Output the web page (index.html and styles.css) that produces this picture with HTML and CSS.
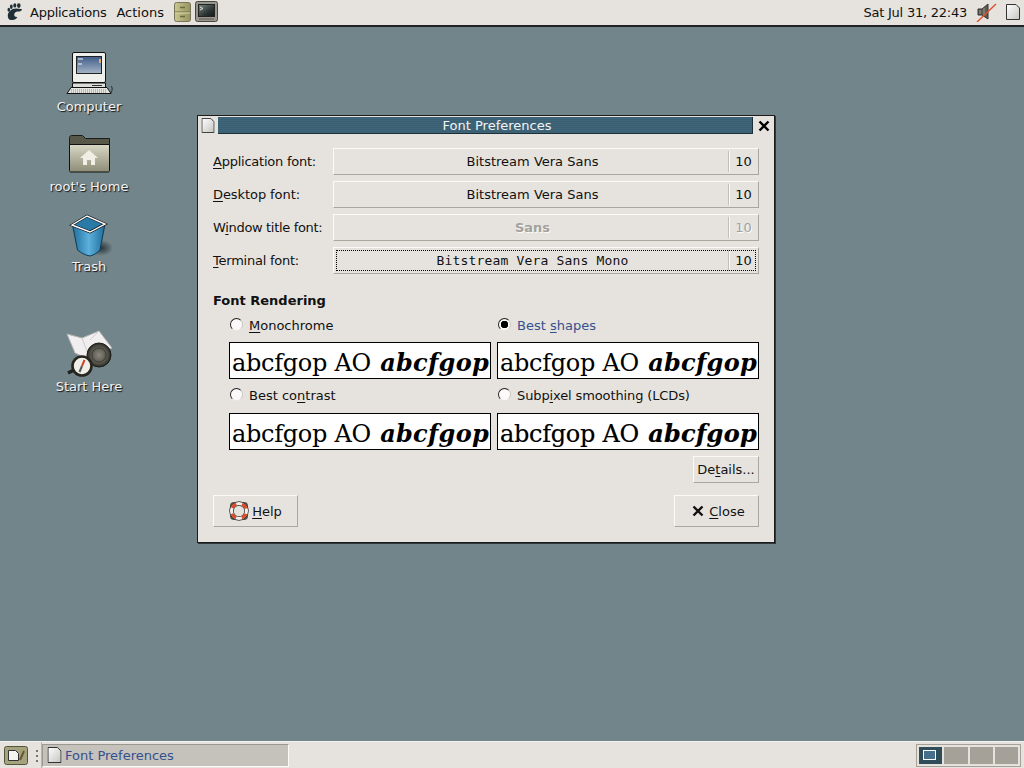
FILE: index.html
```html
<!DOCTYPE html>
<html lang="en">
<head>
<meta charset="utf-8">
<title>Font Preferences</title>
<link rel="stylesheet" href="styles.css">
</head>
<body>
<div class="screen">
  <header class="panel-top">
    <svg class="foot" viewBox="0 0 16 18" width="16" height="18"><path fill="#1f2f38" d="M9.500 5.500c3 .2 4.500 1 5.500.4-.3 1.800-2 2.700-4 2.600-2.200-.1-3.800 1.300-3.800 3.200 0 1.700 1.500 2.500 3.300 2.200-1.300 2-3.200 3.200-5.500 3C2.300 17.600.6 15.300.8 12.400 1 8.600 5 5.200 9.500 5.500z"/><ellipse fill="#1f2f38" cx="1.800" cy="6.800" rx="1.300" ry="2"/><ellipse fill="#1f2f38" cx="4.300" cy="3.800" rx="1.400" ry="2.200"/><ellipse fill="#1f2f38" cx="7.800" cy="2.400" rx="1.500" ry="2.200"/><ellipse fill="#1f2f38" cx="11.800" cy="2.600" rx="1.800" ry="2.300"/></svg>
    <span class="menu-apps">Applications</span>
    <span class="menu-actions">Actions</span>
    <svg class="launcher-a" viewBox="0 0 17 20" width="17" height="20"><defs><linearGradient id="cab" x1="0" x2="1"><stop offset="0" stop-color="#c9c68e"/><stop offset="1" stop-color="#96925f"/></linearGradient></defs><rect x=".5" y=".5" width="16" height="19" rx="2" fill="url(#cab)" stroke="#77755a"/><path d="M1 10h15" stroke="#6e6c48"/><path d="M1 11h15" stroke="#dcdaaa"/><path d="M6 5.500h5M6 14.500h5" stroke="#6a6844" stroke-width="1.500"/></svg>
    <svg class="launcher-b" viewBox="0 0 23 21" width="23" height="21"><defs><linearGradient id="term" x1="0" y1="0" x2="1" y2="1"><stop offset="0" stop-color="#7b8a86"/><stop offset=".6" stop-color="#2c3533"/><stop offset="1" stop-color="#141918"/></linearGradient></defs><rect x=".5" y=".5" width="22" height="20" rx="2" fill="#98978c" stroke="#47473f"/><rect x="3.500" y="3.500" width="16" height="12" fill="url(#term)" stroke="#222"/><path d="M5 6l3 1.500-3 1.500" stroke="#dfe5e2" fill="none"/><path d="M4 18h15" stroke="#5c5b53"/></svg>
    <span class="clock">Sat Jul 31, 22:43</span>
    <svg class="speaker" viewBox="0 0 21 20" width="21" height="20"><path d="M2 7h4l6-5v15l-6-4H2z" fill="#5f5d55" stroke="#33322d"/><path d="M4 8v4M8 6v8" stroke="#98958a"/><path d="M1 20L20 2" stroke="#e0502c" stroke-width="1.400"/></svg>
    <svg class="note" viewBox="0 0 14 16" width="14" height="16"><use href="#doc"/></svg>
  </header>

  <main class="desktop">
    <svg class="sprites" width="0" height="0"><defs>
      <linearGradient id="paper" x1="0" y1="0" x2="1" y2="1"><stop offset="0" stop-color="#fff"/><stop offset="1" stop-color="#c4c4c0"/></linearGradient>
      <symbol id="doc" viewBox="0 0 14 16"><path d="M.5.500h9.500l3.500 3.500v11.500H.5z" fill="url(#paper)" stroke="#333"/></symbol>
    </defs></svg>

    <div class="icons">
      <figure class="icon">
        <svg viewBox="0 0 48 48" width="48" height="48"><defs><linearGradient id="scr" x1="0" y1="0" x2="0" y2="1"><stop offset="0" stop-color="#3f5d88"/><stop offset="1" stop-color="#a5b4c6"/></linearGradient></defs><rect x="7.500" y="2.500" width="33" height="30" rx="1.500" fill="#efefec" stroke="#111"/><rect x="11.500" y="6.500" width="25" height="17" fill="url(#scr)" stroke="#222"/><path d="M13 9h5M13 14h4" stroke="#fff"/><path d="M34 9h2v4h-2z" fill="#e0b060"/><path d="M7.500 33h33v5h-33z" fill="#dcdcd8" stroke="#111"/><path d="M27 35.500h10" stroke="#333"/><path d="M2 43.500l4-6h36l4 6z" fill="#e4e4e0" stroke="#111"/><path d="M6 40h36M6 42h36" stroke="#8a8a86" stroke-dasharray="1 1"/><path d="M46 36c2 2 1 5 0 7" stroke="#222" fill="none"/></svg>
        <figcaption>Computer</figcaption>
      </figure>
      <figure class="icon">
        <svg viewBox="0 0 48 48" width="48" height="48"><defs><linearGradient id="fld" x1="0" y1="0" x2="0" y2="1"><stop offset="0" stop-color="#d9d8c6"/><stop offset="1" stop-color="#8d8c76"/></linearGradient></defs><path d="M4.500 10V7.500c0-1 1-2 2-2h11l3 3h24v9h-40z" fill="#58584a" stroke="#1d1d17"/><path d="M4.500 14.500h40v26c0 1-.7 1.500-1.500 1.500H6c-1 0-1.500-.5-1.500-1.500z" fill="url(#fld)" stroke="#111"/><path d="M24 20l9 8h-3v7h-4v-5h-4v5h-4v-7h-3z" fill="#efefe6"/></svg>
        <figcaption>root's Home</figcaption>
      </figure>
      <figure class="icon">
        <svg viewBox="0 0 48 48" width="48" height="48"><defs><linearGradient id="bin" x1="0" x2="1"><stop offset="0" stop-color="#1f6d9c"/><stop offset=".5" stop-color="#5cb0dc"/><stop offset="1" stop-color="#1e6a98"/></linearGradient><radialGradient id="shade"><stop offset="0" stop-color="#2a3336"/><stop offset="1" stop-color="#2a3336" stop-opacity="0"/></radialGradient></defs><ellipse cx="36" cy="38" rx="12" ry="8" fill="url(#shade)"/><path d="M7.500 15l5 25c4 3 7 5 12.500 6 4-1 7-3 10-6l5-26z" fill="url(#bin)" stroke="#123a52"/><path d="M7 15l15-9 18 8-15 8z" fill="#2a7aa8"/><path d="M7 15l15-9 18 8-15 8z" fill="none" stroke="#111" stroke-width="2.600"/><path d="M7 15l15-9 18 8-15 8z" fill="none" stroke="#fff" stroke-width="1.400"/></svg>
        <figcaption>Trash</figcaption>
      </figure>
      <figure class="icon icon-gap">
        <svg viewBox="0 0 48 48" width="48" height="48"><defs><radialGradient id="lid"><stop offset="0" stop-color="#8a887c"/><stop offset=".7" stop-color="#55534a"/><stop offset="1" stop-color="#2b2a25"/></radialGradient></defs><path d="M2 4l15 4 17-7 13 17-14 5-8 7-15-7z" fill="#f0eeee" stroke="#b4b2b0"/><path d="M17 8l8 21M34 1l-9 9" stroke="#cfcdcb"/><circle cx="34" cy="25" r="12" fill="url(#lid)" stroke="#1d1d1a"/><circle cx="34" cy="25" r="7" fill="none" stroke="#3c3b35"/><path d="M3 43l8-4" stroke="#222" stroke-width="3.500"/><circle cx="17" cy="36" r="9.500" fill="#efefe8" stroke="#26251f" stroke-width="2.600"/><path d="M19.500 30l-2.500 6" stroke="#d4422a" stroke-width="2"/><path d="M17 36l-2.500 6" stroke="#555" stroke-width="2"/></svg>
        <figcaption>Start Here</figcaption>
      </figure>
    </div>

    <section class="window">
      <div class="titlebar">
        <svg class="win-menu" viewBox="0 0 14 16" width="14" height="15"><use href="#doc"/></svg>
        <div class="title">Font Preferences</div>
        <svg class="win-close" viewBox="0 0 12 12" width="12" height="12"><path d="M1.500 1.500l9 9M10.500 1.500l-9 9" stroke="#000" stroke-width="2.400"/></svg>
      </div>
      <div class="content">
        <div class="fonts">
          <label class="font-label"><u>A</u>pplication font:</label>
          <div class="font-btn"><span class="font-name">Bitstream Vera Sans</span><span class="font-size">10</span></div>
          <label class="font-label loose"><u>D</u>esktop font:</label>
          <div class="font-btn"><span class="font-name">Bitstream Vera Sans</span><span class="font-size">10</span></div>
          <label class="font-label tight">W<u>i</u>ndow title font:</label>
          <div class="font-btn disabled"><span class="font-name strong">Sans</span><span class="font-size">10</span></div>
          <label class="font-label"><u>T</u>erminal font:</label>
          <div class="font-btn focused"><span class="font-name mono">Bitstream Vera Sans Mono</span><span class="font-size">10</span></div>
        </div>

        <h2 class="heading">Font Rendering</h2>

        <div class="rendering">
          <div class="option">
            <div class="radio-row"><span class="radio"></span><span><u>M</u>onochrome</span></div>
            <div class="sample">abcfgop AO <b>abcfgop</b></div>
          </div>
          <div class="option">
            <div class="radio-row hot"><span class="radio on"></span><span>Best <u>s</u>hapes</span></div>
            <div class="sample">abcfgop AO <b>abcfgop</b></div>
          </div>
          <div class="option">
            <div class="radio-row lower"><span class="radio"></span><span>Best co<u>n</u>trast</span></div>
            <div class="sample">abcfgop AO <b>abcfgop</b></div>
          </div>
          <div class="option">
            <div class="radio-row lower"><span class="radio"></span><span class="subpixel">Subp<u>i</u>xel smoothing (LCDs)</span></div>
            <div class="sample sample-lcd">abcfgop AO <b>abcfgop</b></div>
          </div>
        </div>

        <div class="details-row"><div class="btn btn-details">De<u>t</u>ails...</div></div>

        <div class="actions">
          <div class="btn btn-action">
            <svg viewBox="0 0 20 20" width="20" height="20"><rect x="1" y="1" width="18" height="18" rx="4" fill="#55534e"/><circle cx="10" cy="10" r="7.500" fill="#e6e3de" stroke="#333" stroke-width="4.500"/><circle cx="10" cy="10" r="7.500" fill="none" stroke="#f2f0ec" stroke-width="3"/><circle cx="10" cy="10" r="7.500" fill="none" stroke="#dc4a26" stroke-width="3" stroke-dasharray="5.890 5.890" stroke-dashoffset="-2.950"/></svg>
            <span><u>H</u>elp</span>
          </div>
          <div class="btn btn-action btn-close">
            <svg viewBox="0 0 12 12" width="12" height="12"><path d="M1.500 1.500l9 9M10.500 1.500l-9 9" stroke="#111" stroke-width="2.400"/></svg>
            <span><u>C</u>lose</span>
          </div>
        </div>
      </div>
    </section>
  </main>

  <footer class="panel-bottom">
    <svg class="show-desk" viewBox="0 0 24 19" width="24" height="19"><rect x=".5" y=".5" width="23" height="18" rx="2" fill="#a5a37e" stroke="#55553e"/><path d="M4.500 4.500h7l3 3v7h-10z" fill="#f4f4f0" stroke="#333"/><path d="M16 14l4-9" stroke="#6b5430" stroke-width="2"/></svg>
    <div class="handle"></div>
    <div class="task">
      <svg viewBox="0 0 14 16" width="15" height="16"><use href="#doc"/></svg>
      <span>Font Preferences</span>
    </div>
    <div class="pager">
      <div class="ws ws-on"><span class="mini"></span></div>
      <div class="ws"></div>
      <div class="ws"></div>
      <div class="ws"></div>
    </div>
  </footer>
</div>
</body>
</html>
```
FILE: styles.css
```css
* { box-sizing: border-box; }
html, body { margin: 0; height: 100%; overflow: hidden; }
body { font-family: "DejaVu Sans", sans-serif; font-size: 13px; color: #111; }
u { text-underline-offset: 2px; text-decoration-thickness: 1px; }

.screen { display: flex; flex-direction: column; width: 1024px; height: 768px; background: #72858b; }

/* top panel */
.panel-top {
  display: flex; align-items: center; height: 27px; flex: none;
  padding-bottom: 2px; background: #e6e3de; border-bottom: 2px solid #222;
}
.foot { margin-left: 7px; }
.menu-apps { margin: 2px 0 0 7px; letter-spacing: -.25px; }
.menu-actions { margin: 2px 0 0 10px; }
.launcher-a { margin-left: 10px; }
.launcher-b { margin-left: 4px; }
.clock { margin: 2px 0 0 auto; letter-spacing: -.24px; }
.speaker { margin-left: 9px; }
.note { margin: 0 4px 0 9px; }

/* desktop */
.desktop { position: relative; flex: 1; min-height: 0; }
.sprites { position: absolute; }
.icons { display: flex; flex-direction: column; gap: 16px; width: 80px; margin-left: 49px; padding-top: 23px; }
.icon { margin: 0; display: flex; flex-direction: column; align-items: center; height: 64px; }
.icon svg { flex: none; }
.icon figcaption { height: 16px; margin-top: 1px; line-height: 16px; white-space: nowrap; color: #f2f2f2; text-shadow: 1px 1px 1px #111; }
.icon-gap { margin-top: 40px; }

/* dialog */
.window {
  position: absolute; left: 197px; top: 88px; width: 578px; height: 428px;
  background: #e6e3de; border: 1px solid #1c1c1c; box-shadow: 1px 1px 0 #30383b;
}
.titlebar { display: flex; align-items: center; height: 19px; padding: 0 4px 0 3px; }
.win-menu { flex: none; }
.title {
  flex: 1; height: 17px; margin-left: 3px; padding-left: 24px; line-height: 17px; text-align: center;
  color: #f4f4f4; background: repeating-linear-gradient(0deg, #3f6579 0 1px, #3a5f73 1px 2px);
  border: 1px solid #1c2f39; border-width: 0 1px 1px 0;
}
.win-close { flex: none; margin-left: 5px; }
.content { padding: 13px 15px 0; }

.fonts { display: grid; grid-template-columns: 120px 426px; grid-auto-rows: 27px; row-gap: 6px; align-items: center; }
.font-label { white-space: nowrap; letter-spacing: -.24px; }
.loose { letter-spacing: -.08px; }
.tight { letter-spacing: -.33px; }
.font-btn {
  display: flex; align-items: center; height: 27px; background: #e6e3de;
  border: 1px solid; border-color: #fbfaf8 #a9a69f #a9a69f #fbfaf8;
}
.font-name { flex: 1; text-align: center; padding-left: 3px; }
.font-size { flex: none; width: 30px; height: 21px; line-height: 21px; text-align: center; border-left: 1px solid #c2bfb8; box-shadow: inset 1px 0 0 #fbfaf8; }
.strong { font-weight: bold; }
.mono { font-family: "DejaVu Sans Mono", monospace; font-size: 13px; letter-spacing: .17px; }
.disabled { color: #a3a19b; text-shadow: 1px 1px 0 #fbfaf8; }
.focused { outline: 1px dotted #000; outline-offset: -4px; }

.heading { margin: 19px 0 6px; height: 16px; font-size: 13px; line-height: 16px; font-weight: bold; }

.rendering { display: grid; grid-template-columns: 262px 262px; column-gap: 6px; row-gap: 7px; margin-left: 16px; }
.option { display: flex; flex-direction: column; gap: 9px; }
.radio-row { display: flex; align-items: center; gap: 6px; height: 18px; padding-top: 2px; }
.lower { padding-top: 0; }
.subpixel { letter-spacing: -.12px; }
.hot { color: #35508f; }
.radio {
  flex: none; width: 13px; height: 13px; margin: -2px 0 0 1px; border-radius: 50%; background: #fbfaf8;
  border: 1px solid; border-color: #222 #c9c6bf #e9e7e2 #222;
}
.on { background: radial-gradient(circle, #000 0 3.500px, #fbfaf8 4px); }
.sample {
  height: 37px; line-height: 40px; padding-left: 2px; overflow: hidden; white-space: nowrap; letter-spacing: -.3px;
  font-family: "DejaVu Serif", serif; font-size: 24px; color: #000; background: #fff; border: 1px solid #000;
}
.sample b { margin-left: 2px; font-style: italic; font-weight: bold; letter-spacing: .3px; }
.sample-lcd { text-shadow: .5px 0 0 rgba(230,120,0,.35), -.5px 0 0 rgba(0,120,230,.35); }

.btn {
  display: flex; align-items: center; justify-content: center;
  background: #e6e3de; border: 1px solid; border-color: #fbfaf8 #a9a69f #a9a69f #fbfaf8;
}
.details-row { display: flex; justify-content: flex-end; margin-top: 6px; }
.btn-details { width: 66px; height: 27px; }
.actions { display: flex; justify-content: space-between; margin-top: 12px; }
.btn-action { width: 85px; height: 32px; gap: 3px; }
.btn-close { gap: 5px; padding-left: 4px; }

/* bottom panel */
.panel-bottom {
  display: flex; align-items: center; flex: none; height: 27px;
  background: #e6e3de; border-top: 1px solid #f4f3f0;
}
.show-desk { margin-left: 4px; }
.handle { width: 9px; height: 26px; margin-left: 5px; border-right: 1px solid #b8b5ae;
  background:
    radial-gradient(circle, #77746e 0 1px, transparent 1.200px) 2px 7px / 4px 4px no-repeat,
    radial-gradient(circle, #77746e 0 1px, transparent 1.200px) 2px 12px / 4px 4px no-repeat,
    radial-gradient(circle, #77746e 0 1px, transparent 1.200px) 2px 17px / 4px 4px no-repeat; }
.task {
  display: flex; align-items: center; gap: 3px; width: 247px; height: 23px; padding-left: 4px;
  color: #35508f; background: #c5c2bb; border: 1px solid; border-color: #9b9890 #fbfaf8 #fbfaf8 #9b9890;
}
.pager {
  display: flex; gap: 2px; width: 105px; height: 23px; margin: 0 3px 0 auto; padding: 2px;
  background: #e6e3de; border: 1px solid #a5a198;
}
.ws { flex: 1; display: flex; align-items: center; padding-left: 4px; background: #a5a198; }
.ws-on { background: #2f4d58; }
.mini { width: 13px; height: 10px; background: #44708c; border: 1px solid #fff; }
```
